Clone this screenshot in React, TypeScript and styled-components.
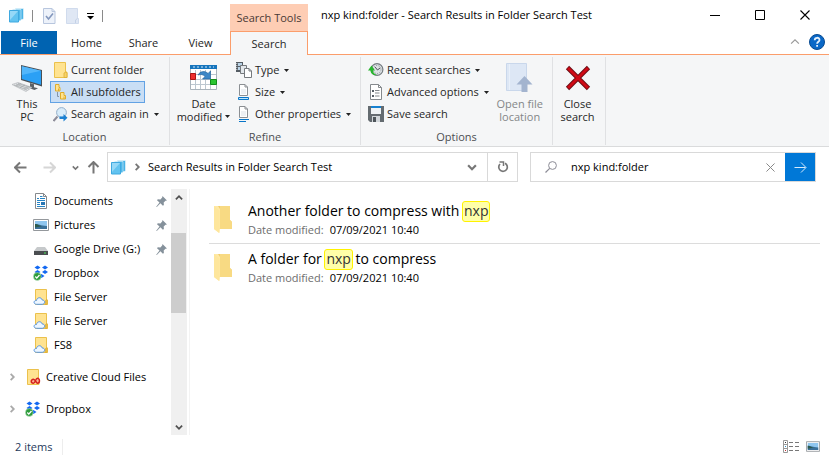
import React from "react";
import styled, { createGlobalStyle, css } from "styled-components";

const GlobalStyle = createGlobalStyle`
  * { box-sizing: border-box; }
  body {
    margin: 0;
    background: #fff;
    color: #000;
    font-family: "Open Sans", "Noto Sans", sans-serif;
    font-size: 11px;
    line-height: 16px;
  }
  button, input { font: inherit; color: inherit; }
  button { border: 0; padding: 0; background: transparent; white-space: nowrap; }
  svg { display: block; flex: none; }
  ul { list-style: none; margin: 0; padding: 0; }
`;

const Window = styled.div`
  display: flex;
  flex-direction: column;
  min-height: 100vh;
`;

/* ---------- title bar and tabs ---------- */

const Header = styled.header`
  display: grid;
  grid-template-columns: 230px 78px 1fr;
  grid-template-rows: 31px 24px;
`;

const QuickAccess = styled.div`
  display: flex;
  align-items: center;
  gap: 8px;
  padding-left: 9px;
`;

const QuickDivider = styled.span`
  width: 1px;
  height: 12px;
  background: #8a8a8a;
`;

const QuickButton = styled.button<{ $page?: boolean }>`
  display: flex;
  margin-left: ${(p) => (p.$page ? 2 : 0)}px;
`;

const ContextLabel = styled.div`
  margin-top: 4px;
  padding-top: 6px;
  background: #fecdb4;
  color: #4a3a34;
  text-align: center;
  white-space: nowrap;
`;

const TitleBar = styled.div`
  display: flex;
  align-items: center;
  justify-content: space-between;
  padding: 0 2px 1px 13px;
`;

const Title = styled.h1`
  margin: 0;
  font-size: 11px;
  font-weight: 400;
  white-space: nowrap;
`;

const WindowButtons = styled.div`
  display: flex;
`;

const WindowButton = styled.button`
  display: flex;
  align-items: center;
  justify-content: center;
  width: 45px;
  height: 30px;
`;

const Tabs = styled.nav`
  display: flex;
  border-bottom: 1px solid #fb9d6b;
`;

const Tab = styled.button<{ $file?: boolean; $active?: boolean }>`
  width: 57px;
  color: #262626;
  ${(p) =>
    p.$file &&
    css`
      margin: 0 1px;
      width: 56px;
      background: #0063b1;
      color: #fff;
    `}
  ${(p) =>
    p.$active &&
    css`
      width: 100%;
      border: 1px solid #fb9d6b;
      border-bottom: 0;
      background: #f5f6f7;
    `}
`;

const TabTools = styled.div`
  display: flex;
  align-items: center;
  justify-content: flex-end;
  gap: 9px;
  padding: 0 4px 1px 0;
  border-bottom: 1px solid #fb9d6b;
`;

const IconButton = styled.button`
  display: flex;
  align-items: center;
  justify-content: center;
`;

/* ---------- ribbon ---------- */

const Ribbon = styled.section`
  display: grid;
  grid-template-columns: 170px 191px 192px 53px;
  padding: 2px 0 1px;
  background: #f5f6f7;
  border-bottom: 1px solid #dadbdc;
`;

const Group = styled.div`
  display: flex;
  flex-direction: column;
  border-right: 1px solid #e0e1e3;
`;

const GroupBody = styled.div`
  display: flex;
  flex: 1;
  padding: 2px 0 0 4px;
`;

const GroupLabel = styled.div`
  height: 20px;
  padding-top: 4px;
  line-height: 16px;
  text-align: center;
  color: #4c4f52;
`;

const BigButton = styled.button<{ $width: number; $muted?: boolean }>`
  display: flex;
  flex-direction: column;
  align-items: center;
  width: ${(p) => p.$width}px;
  padding-top: 2px;
  line-height: 13px;
  color: ${(p) => (p.$muted ? "#848688" : "#262626")};
`;

const BigIcon = styled.span`
  display: flex;
  align-items: center;
  justify-content: center;
  height: 34px;
  margin-bottom: 2px;
`;

const CaptionLine = styled.span`
  display: flex;
  align-items: center;
  gap: 3px;
`;

const Stack = styled.div`
  display: flex;
  flex-direction: column;
  align-items: flex-start;
`;

const SmallButton = styled.button<{ $selected?: boolean }>`
  display: flex;
  align-items: center;
  gap: 3px;
  height: 22px;
  padding: 0 3px 0 2px;
  border: 1px solid ${(p) => (p.$selected ? "#62a2e4" : "transparent")};
  background: ${(p) => (p.$selected ? "#c9def5" : "transparent")};
  color: #262626;
`;

const CaretGap = styled.span`
  padding-left: 2px;
`;

/* ---------- address row ---------- */

const AddressRow = styled.div`
  display: grid;
  grid-template-columns: 107px minmax(0, 411fr) minmax(0, 298fr);
  align-items: center;
  padding: 5px 13px 7px 0;
`;

const Arrows = styled.div`
  display: flex;
  align-items: center;
  padding-left: 14px;
`;

const ArrowButton = styled(IconButton)<{ $width: number }>`
  width: ${(p) => p.$width}px;
  height: 24px;
`;

const AddressBox = styled.div`
  display: flex;
  height: 30px;
  border: 1px solid #d9d9d9;
`;

const Crumbs = styled.div`
  display: flex;
  flex: 1;
  align-items: center;
  gap: 7px;
  padding-left: 3px;
`;

const BoxButton = styled(IconButton)<{ $divided?: boolean }>`
  width: 30px;
  border-left: ${(p) => (p.$divided ? "1px solid #d9d9d9" : "0")};
`;

const SearchForm = styled.form`
  display: flex;
  align-items: stretch;
  height: 30px;
  margin-left: 12px;
  padding-left: 14px;
  border: 1px solid #d9d9d9;
`;

const SearchLabel = styled.label`
  display: flex;
  flex: 1;
  align-items: center;
  gap: 14px;
  min-width: 0;
`;

const SearchInput = styled.input`
  flex: 1;
  min-width: 0;
  padding: 0;
  border: 0;
  outline: 0;
  background: transparent;
`;

const GoButton = styled(IconButton)`
  width: 30px;
  background: #0078d7;
`;

/* ---------- body ---------- */

const Body = styled.div`
  display: flex;
  flex: 1;
`;

const NavPane = styled.nav`
  width: 171px;
`;

const NavItem = styled.li<{ $root?: boolean }>`
  display: flex;
  align-items: center;
  height: 24px;
  margin-top: ${(p) => (p.$root ? 8 : 0)}px;
  padding-left: ${(p) => (p.$root ? 8 : 33)}px;
  padding-right: 4px;
`;

const Expander = styled(IconButton)`
  width: 8px;
  margin-right: 9px;
`;

const NavLink = styled.a`
  display: flex;
  flex: 1;
  align-items: center;
  gap: 5px;
  color: inherit;
  text-decoration: none;
  white-space: nowrap;
`;

const ScrollBar = styled.div`
  display: flex;
  flex-direction: column;
  width: 16px;
  background: #f0f0f0;
`;

const ScrollButton = styled(IconButton)`
  height: 17px;
`;

const ScrollGap = styled.span<{ $share: number }>`
  flex: ${(p) => p.$share} 1 0;
`;

const ScrollThumb = styled.span`
  flex: 79 1 0;
  margin-right: 1px;
  background: #cdcdcd;
`;

const Results = styled.main`
  flex: 1;
  margin-left: 2px;
  padding: 7px 9px 0 19px;
  border-left: 1px solid #f3f3f3;
`;

const Result = styled.li`
  display: flex;
  align-items: center;
  gap: 12px;
  height: 48px;
  padding: 0 0 2px 3px;
  &:not(:last-child) { border-bottom: 1px solid #dcdcdc; }
`;

const ResultTitle = styled.a`
  display: block;
  color: #000;
  font-size: 14px;
  line-height: 22px;
  text-decoration: none;
  white-space: nowrap;
`;

const Mark = styled.mark`
  display: inline-block;
  height: 21px;
  margin: 0 -1px;
  padding: 0 1px;
  border: 1px solid #fff200;
  border-radius: 3px;
  background: #ffffa8;
  color: #333;
  line-height: 18px;
`;

const ResultMeta = styled.div`
  display: flex;
  gap: 6px;
  color: #6d6d6d;
`;

const MetaValue = styled.span`
  color: #000;
`;

const StatusBar = styled.footer`
  display: flex;
  align-items: center;
  justify-content: space-between;
  height: 24px;
  padding: 0 9px 0 15px;
  color: #1e395b;
`;

const Count = styled.span`
  padding-right: 10px;
  border-right: 1px solid #ededed;
`;

const ViewButtons = styled.div`
  display: flex;
  align-items: center;
  gap: 7px;
  padding-bottom: 2px;
`;

/* ---------- icons ---------- */

const Caret = () => (
  <svg width="5" height="3" viewBox="0 0 5 3"><path d="M0 0h5L2.5 3z" fill="#222" /></svg>
);

const StackIcon = () => (
  <svg width="15" height="15" viewBox="0 0 15 15">
    <path d="M6 .5h8.500v10.500l-3 1z" fill="#49b3e6" stroke="#fff" strokeWidth=".5" />
    <path d="M3.500 1.500h8.500v11l-5 1z" fill="#4fb9ea" stroke="#fff" strokeWidth=".5" />
    <path d="M.5 2.500h9v11.500h-9z" fill="#62c3f0" stroke="#3fa9e0" />
    <path d="M1 3h8L1 12z" fill="#96d8f7" />
  </svg>
);

const CheckPage = () => (
  <svg width="13" height="16" viewBox="0 0 13 16">
    <path d="M.5.5h8.500l3 3v12H.5z" fill="#edf2fa" stroke="#b8c6de" />
    <path d="M9 .5v3h3" fill="none" stroke="#b8c6de" />
    <path d="m3 8 2.500 3L10 5.500" fill="none" stroke="#8397bd" strokeWidth="1.600" />
  </svg>
);

const PalePage = () => (
  <svg width="13" height="16" viewBox="0 0 13 16">
    <path d="M.5.5h11v10h1v5H.5z" fill="#dfe7f4" stroke="#d0dbed" />
    <path d="M9.500 15v-3l2-1.500" fill="none" stroke="#c4d1e6" />
  </svg>
);

const QuickMenu = () => (
  <svg width="7" height="8" viewBox="0 0 7 8"><path d="M0 1h7v1H0zM0 4h7L3.500 7.500z" fill="#000" /></svg>
);

const ThisPc = () => (
  <svg width="32" height="30" viewBox="0 0 32 30">
    <path d="M10 2 31 7v16.500L10 17z" fill="#4a4f54" />
    <path d="M10.800 3.200 30 7.800v14L10.800 16z" fill="#2ba0f5" />
    <path d="M10.800 3.200 30 7.800 10.800 12z" fill="#53b6fa" />
    <path d="m19 20 4 1.200v3l4 1-3.500 1.800-7-2.500 2.500-1z" fill="#5c6166" />
    <path d="m1 21.500 6-2 14 5-6 4z" fill="#dfe2e4" stroke="#b4b8bb" strokeWidth=".7" />
    <path d="M3 22l13 5M5 21l13 5M7 20.300l12.500 4.400M5 23l5-2.500M9 24.500l5-2.500M13 26l5-2.500" stroke="#a4a8ab" strokeWidth=".7" />
  </svg>
);

const FolderSmall = () => (
  <svg width="15" height="16" viewBox="0 0 15 16">
    <path d="M1.500.5h11V10h1.500v5.500H1.500z" fill="#ffe391" stroke="#ebc14c" />
    <path d="M11 15.500V11l2-1 1 1v4.500z" fill="#f8d269" stroke="#dcae34" strokeWidth=".8" />
  </svg>
);

const SubfoldersIcon = () => (
  <svg width="15" height="16" viewBox="0 0 15 16">
    <path d="M4.500 8v4.500H6" fill="none" stroke="#8395a8" />
    <path d="M2.500.5h3.500v3h1v3.500H2.500zM7.500 8.500h3.500v3h1.500v3.500h-5z" fill="#ffe391" stroke="#e0ac2a" />
    <path d="M5.500 7V4.500M11 15v-2.500" stroke="#e0ac2a" />
  </svg>
);

const SearchAgainIcon = () => (
  <svg width="15" height="15" viewBox="0 0 15 15">
    <path d="m.5 14 4-4.500" stroke="#8d8c99" strokeWidth="2" />
    <circle cx="8.500" cy="5.500" r="4.900" fill="#d8ecfa" stroke="#92aec9" />
    <path d="M6.500 9.500h4V7l4 3.750-4 3.750V12h-4z" fill="#1a80d2" />
  </svg>
);

const CalendarIcon = () => (
  <svg width="27" height="26" viewBox="0 0 27 26">
    <path d="M.5.5h26v24H.5z" fill="#fff" stroke="#a9b3bb" />
    <path d="M0 0h27v4H0z" fill="#1675bd" />
    <path d="M3 2h21" stroke="#d3eafa" strokeDasharray="2 2" />
    <path d="M1 9.500h25M1 14.500h25M1 19.500h25M5.500 5v19M10.500 5v19M15.500 5v19M20.500 5v19" stroke="#bcc7d0" />
    <path d="M.5 8.500h5v6h-5z" fill="#ee2f2f" stroke="#aa1515" />
    <path d="M20.500 14.500h6v5h-6z" fill="#2bc531" stroke="#138c1b" />
    <path d="M8 10c2-4 7-4.500 10-1.500L20.500 6v8h-8l2.500-2.500c-2-2-4-2.500-7-1.500z" fill="#3e87c6" stroke="#205f99" strokeWidth=".6" />
  </svg>
);

const TypeIcon = () => (
  <svg width="16" height="16" viewBox="0 0 16 16">
    <path d="M0 0h7v10H0z" fill="#555d64" />
    <path d="M2 1h4v3H2zM2 5h4v3H2z" fill="#b9d3e7" />
    <path d="M.8 1v8" stroke="#fff" strokeWidth=".8" strokeDasharray="1 1" />
    <path d="M4.500 3.500h6v8h-6z" fill="#e2e7eb" stroke="#75797d" />
    <path d="M8.500 6.500h4.500l2.500 2.500v6.500h-7z" fill="#fff" stroke="#75797d" />
    <path d="M13 6.500V9h2.500" fill="none" stroke="#75797d" />
  </svg>
);

const PageLines = ({ bar }: { bar?: boolean }) => (
  <svg width="16" height="16" viewBox="0 0 16 16">
    <path d="M3.500.5H9L11.500 3v8.500h-8z" fill="#fff" stroke="#8b8f93" />
    <path d="M5 5h5v5H5z" fill="#edf0f3" />
    <path d="M9 .5V3h2.500" fill="none" stroke="#8b8f93" />
    {bar ? (
      <path d="M2.500 13.500h10v2h-10z" fill="#bfe4fb" stroke="#0876c9" />
    ) : (
      <path d="M3 13.500h10M3 15.500h7" stroke="#0876c9" />
    )}
  </svg>
);

const RecentIcon = () => (
  <svg width="16" height="16" viewBox="0 0 16 16">
    <circle cx="9" cy="7.500" r="5.900" fill="#dce1e4" stroke="#747b80" strokeWidth="1.200" />
    <circle cx="9" cy="7.500" r="4" fill="none" stroke="#84898d" strokeDasharray="1 1.500" />
    <path d="m7 5 2.500 3L12 6" fill="none" stroke="#4c5459" />
    <path d="M9 13c-4 .8-6.500-1.500-6.500-4.500H0l3.500-5 3.500 5H5c0 2 1.500 3.500 4 4.500z" fill="#29b52f" />
  </svg>
);

const AdvancedIcon = () => (
  <svg width="16" height="16" viewBox="0 0 16 16">
    <path d="M2.500.5h8l3 3v12h-11z" fill="#fff" stroke="#85898d" />
    <path d="M10.500.5v3h3M7 6.500h4.500M7 9h4.500M7 12h4.500" fill="none" stroke="#85898d" />
    <path d="M4 6h2v2H4zM4 11h2v2H4z" fill="#555d64" />
  </svg>
);

const SaveIcon = () => (
  <svg width="16" height="16" viewBox="0 0 16 16">
    <path d="M0 0h16v16H2l-2-2z" fill="#646b70" />
    <path d="M3 0h10v8H3z" fill="#eef2f4" />
    <path d="M3 0h10v2H3z" fill="#1681d0" />
    <path d="M4 10h8v6H4z" fill="#d1d6da" />
    <path d="M5 11h3v5H5z" fill="#4d5459" />
  </svg>
);

const OpenLocation = () => (
  <svg width="27" height="30" viewBox="0 0 27 30">
    <path d="M.5.5h20v27H.5z" fill="#dde7f5" stroke="#c9d7eb" />
    <path d="M3.500 1v26" stroke="#e9f0fa" />
    <path d="m18.500 13 8 8.500h-5V29h-6v-7.500h-5z" fill="#a3b4cf" />
  </svg>
);

const CloseSearch = () => (
  <svg width="26" height="26" viewBox="0 0 26 26">
    <path d="m2.500 2.500 21 21m0-21-21 21" stroke="#650b12" strokeWidth="4.600" />
    <path d="m3 3 20 20m0-20L3 23" stroke="#cf0a15" strokeWidth="3" />
  </svg>
);

const Chevron = ({ dir, color = "#666", size = 8, weight = 2 }: { dir: "up" | "down" | "right"; color?: string; size?: number; weight?: number }) => {
  const d = { up: "m1 6 3.500-3.500L8 6", down: "m1 3 3.500 3.500L8 3", right: "m3 1 3.500 3.500L3 8" }[dir];
  return (
    <svg width={size} height={size} viewBox="0 0 9 9"><path d={d} fill="none" stroke={color} strokeWidth={weight} /></svg>
  );
};

const Arrow = ({ color, turn = 0, weight = 2 }: { color: string; turn?: number; weight?: number }) => (
  <svg width="13" height="13" viewBox="0 0 13 13">
    <path d="M12.500 6.500H1.500M6 1.500l-5 5 5 5" fill="none" stroke={color} strokeWidth={weight} transform={`rotate(${turn} 6.500 6.500)`} />
  </svg>
);

const RefreshIcon = () => (
  <svg width="12" height="12" viewBox="0 0 12 12">
    <path d="M8 2.200A4.300 4.300 0 1 1 3 3" fill="none" stroke="#777" strokeWidth="1.700" />
    <path d="M2.500 1h4v4" fill="none" stroke="#777" strokeWidth="1.500" />
  </svg>
);

const GlassIcon = () => (
  <svg width="12" height="12" viewBox="0 0 12 12">
    <circle cx="7.500" cy="4.500" r="3.900" fill="none" stroke="#8c8c96" />
    <path d="m4.700 7.300-4.200 4.200" stroke="#8c8c96" strokeWidth="1.200" />
  </svg>
);

const Cross = ({ size, color }: { size: number; color: string }) => (
  <svg width={size} height={size} viewBox="0 0 10 10"><path d="m.5.5 9 9m0-9-9 9" stroke={color} strokeWidth="1.100" /></svg>
);

const HelpIcon = () => (
  <svg width="16" height="16" viewBox="0 0 16 16">
    <circle cx="8" cy="8" r="7.500" fill="#0a68c7" stroke="#084b91" />
    <path d="M5.700 6.200C5.700 3 10.500 3 10.500 6c0 1.700-2.400 1.900-2.400 3.800" fill="none" stroke="#e4f1fd" strokeWidth="1.800" />
    <path d="M7.200 10.900H9v1.800H7.200z" fill="#e4f1fd" />
  </svg>
);

const DocumentIcon = () => (
  <svg width="16" height="16" viewBox="0 0 16 16">
    <path d="M2.500.5h8l3 3v12h-11z" fill="#fff" stroke="#85898d" />
    <path d="M10.500.5v3h3" fill="none" stroke="#85898d" />
    <path d="M7 3.500h2.500M4 5.500h2M7 5.500h5M4 7.500h8M4 9.500h3M4 11.500h3M4 13.500h8" stroke="#2584c6" />
    <path d="M8 9h4v3H8z" fill="#2a77b4" />
  </svg>
);

const PictureIcon = ({ width = 16, height = 12 }: { width?: number; height?: number }) => (
  <svg width={width} height={height} viewBox="0 0 16 12">
    <path d="M.5.5h15v11H.5z" fill="#fff" stroke="#94989c" />
    <path d="M2 2h12v8H2z" fill="#8fc6ef" />
    <path d="M2 5c4 0 5 1.500 12 2v3H2z" fill="#3a7099" />
    <path d="M2 5c3 0 4 2 7 2.200L2 8.500z" fill="#2c5a4b" />
  </svg>
);

const DriveIcon = () => (
  <svg width="16" height="16" viewBox="0 0 16 16">
    <path d="M4 6h8l3 4H1z" fill="#c6c9cb" />
    <path d="M1 10h14v4H1z" fill="#4a4d50" />
    <path d="M11 11.500h2v1h-2z" fill="#4be35b" />
  </svg>
);

const DropboxIcon = () => (
  <svg width="16" height="16" viewBox="0 0 16 16">
    <path d="m4.500.5 3 2-3 2-3-2zM12 .5l3 2-3 2-3-2zM4.500 5l3 2-3 2-3-2zM12 5l3 2-3 2-3-2zM8.500 9l3 2-3 2-3-2z" fill="#1268f2" />
    <circle cx="4.300" cy="11.500" r="3.900" fill="#2c9b3b" stroke="#d7efd9" strokeWidth=".5" />
    <path d="m2.300 11.500 1.500 1.600L6.500 10" fill="none" stroke="#fff" strokeWidth="1.300" />
  </svg>
);

const CloudFolder = () => (
  <svg width="16" height="16" viewBox="0 0 16 16">
    <path d="M2.500.5h11V11h1v4.500h-12z" fill="#ffe391" stroke="#ebc14c" />
    <path d="M12 15.500V12l2-1.500v5z" fill="#efc24d" stroke="#dcae34" strokeWidth=".7" />
    <path d="M3.500 15.300c-3.500-.3-3-4 0-3.800.5-3.600 5-3.600 5.700-.5 3.300 0 3.300 4.200 0 4.300z" fill="#edf6ff" stroke="#5896df" />
  </svg>
);

const CreativeFolder = () => (
  <svg width="16" height="16" viewBox="0 0 16 16">
    <path d="M2.500.5h11V10h.5v5.500H2.500z" fill="#ffe391" stroke="#ebc14c" />
    <path d="M8.500 14.300c-3 0-3-4 0-4 1.800 0 2.600 4 4 4 2.600 0 2.600-5 0-5-2 0-2.300 5-4 5z" fill="#f9b394" stroke="#d5201e" strokeWidth="1.500" />
  </svg>
);

const PinIcon = () => (
  <svg width="11" height="11" viewBox="0 0 11 11">
    <path d="m6.500 0 4.500 4.500-1.500.3-1.800 1.800.2 2.400-1 .8-2.500-2.500L.8 11l-.6-.3L3.500 6.500 1 4.200l.8-1 2.600.2L6.200 1.600z" fill="#85919b" />
  </svg>
);

const LargeFolder = () => (
  <svg width="24" height="32" viewBox="0 0 24 32">
    <path d="M5 3h13v14l2 2v7H5z" fill="#f3cf6e" />
    <path d="M8 3h10v14l2 2v7H8z" fill="#f8da83" />
    <path d="M2 3h4l2 3v18.500L7 30l-5-4z" fill="#ffe9a5" />
    <path d="M2 3l5.500 4.500V30L2 26z" fill="#fee69c" />
  </svg>
);

const DetailsIcon = () => (
  <svg width="16" height="13" viewBox="0 0 16 13">
    <path d="M.5.5h4v12h-4zM.5 4.500h4M.5 8.500h4" fill="#fff" stroke="#999" />
    <path d="M6 2.500h4M12 2.500h4M6 6.500h4M12 6.500h4M6 10.500h4M12 10.500h4" stroke="#777" />
    <path d="M2 2h1v1H2z" fill="#333" /><path d="M2 6h1v1H2z" fill="#2a92c8" /><path d="M2 10h1v1H2z" fill="#c43232" />
  </svg>
);

/* ---------- data ---------- */

const quickLinks = [
  { name: "Documents", icon: <DocumentIcon />, pinned: true },
  { name: "Pictures", icon: <PictureIcon />, pinned: true },
  { name: "Google Drive (G:)", icon: <DriveIcon />, pinned: true },
  { name: "Dropbox", icon: <DropboxIcon /> },
  { name: "File Server", icon: <CloudFolder /> },
  { name: "File Server", icon: <CloudFolder /> },
  { name: "FS8", icon: <CloudFolder /> },
];

const rootLinks = [
  { name: "Creative Cloud Files", icon: <CreativeFolder /> },
  { name: "Dropbox", icon: <DropboxIcon /> },
];

const results = [
  { before: "Another folder to compress with ", match: "nxp", after: "", date: "07/09/2021 10:40" },
  { before: "A folder for ", match: "nxp", after: " to compress", date: "07/09/2021 10:40" },
];

function Small({ icon, label, menu, selected }: { icon: React.ReactNode; label: string; menu?: boolean; selected?: boolean }) {
  return (
    <SmallButton type="button" $selected={selected}>
      {icon}
      <span>{label}</span>
      {menu && <CaretGap><Caret /></CaretGap>}
    </SmallButton>
  );
}

function Big({ icon, lines, width, menu, muted }: { icon: React.ReactNode; lines: [string, string]; width: number; menu?: boolean; muted?: boolean }) {
  return (
    <BigButton type="button" $width={width} $muted={muted} disabled={muted}>
      <BigIcon>{icon}</BigIcon>
      <CaptionLine>{lines[0]}</CaptionLine>
      <CaptionLine>{lines[1]}{menu && <Caret />}</CaptionLine>
    </BigButton>
  );
}

export default function App() {
  return (
    <>
      <GlobalStyle />
      <Window>
        <Header>
          <QuickAccess>
            <StackIcon />
            <QuickDivider />
            <QuickButton type="button" aria-label="Properties" $page><CheckPage /></QuickButton>
            <QuickButton type="button" aria-label="New folder" $page><PalePage /></QuickButton>
            <QuickButton type="button" aria-label="Customize toolbar"><QuickMenu /></QuickButton>
            <QuickDivider />
          </QuickAccess>
          <ContextLabel>Search Tools</ContextLabel>
          <TitleBar>
            <Title>nxp kind:folder - Search Results in Folder Search Test</Title>
            <WindowButtons>
              <WindowButton type="button" aria-label="Minimize">
                <svg width="10" height="10" viewBox="0 0 10 10"><path d="M0 5.500h10" stroke="#000" /></svg>
              </WindowButton>
              <WindowButton type="button" aria-label="Maximize">
                <svg width="10" height="10" viewBox="0 0 10 10"><path d="M.5.5h9v9h-9z" fill="none" stroke="#000" /></svg>
              </WindowButton>
              <WindowButton type="button" aria-label="Close"><Cross size={10} color="#000" /></WindowButton>
            </WindowButtons>
          </TitleBar>
          <Tabs>
            <Tab type="button" $file>File</Tab>
            <Tab type="button">Home</Tab>
            <Tab type="button">Share</Tab>
            <Tab type="button">View</Tab>
          </Tabs>
          <Tab type="button" $active>Search</Tab>
          <TabTools>
            <IconButton type="button" aria-label="Collapse ribbon"><Chevron dir="up" color="#999" size={10} weight={1} /></IconButton>
            <IconButton type="button" aria-label="Help"><HelpIcon /></IconButton>
          </TabTools>
        </Header>

        <Ribbon>
          <Group>
            <GroupBody>
              <Big icon={<ThisPc />} lines={["This", "PC"]} width={46} />
              <Stack>
                <Small icon={<FolderSmall />} label="Current folder" />
                <Small icon={<SubfoldersIcon />} label="All subfolders" selected />
                <Small icon={<SearchAgainIcon />} label="Search again in" menu />
              </Stack>
            </GroupBody>
            <GroupLabel>Location</GroupLabel>
          </Group>
          <Group>
            <GroupBody>
              <Big icon={<CalendarIcon />} lines={["Date", "modified"]} width={59} menu />
              <Stack>
                <Small icon={<TypeIcon />} label="Type" menu />
                <Small icon={<PageLines bar />} label="Size" menu />
                <Small icon={<PageLines />} label="Other properties" menu />
              </Stack>
            </GroupBody>
            <GroupLabel>Refine</GroupLabel>
          </Group>
          <Group>
            <GroupBody>
              <Stack>
                <Small icon={<RecentIcon />} label="Recent searches" menu />
                <Small icon={<AdvancedIcon />} label="Advanced options" menu />
                <Small icon={<SaveIcon />} label="Save search" />
              </Stack>
              <Big icon={<OpenLocation />} lines={["Open file", "location"]} width={54} muted />
            </GroupBody>
            <GroupLabel>Options</GroupLabel>
          </Group>
          <Group>
            <GroupBody>
              <Big icon={<CloseSearch />} lines={["Close", "search"]} width={41} />
            </GroupBody>
          </Group>
        </Ribbon>

        <AddressRow>
          <Arrows>
            <ArrowButton type="button" aria-label="Back" $width={13}><Arrow color="#777" /></ArrowButton>
            <ArrowButton type="button" aria-label="Forward" $width={44}><Arrow color="#d6d6d6" turn={180} /></ArrowButton>
            <ArrowButton type="button" aria-label="Recent locations" $width={8}><Chevron dir="down" color="#777" size={7} /></ArrowButton>
            <ArrowButton type="button" aria-label="Up" $width={28}><Arrow color="#777" turn={90} /></ArrowButton>
          </Arrows>
          <AddressBox>
            <Crumbs>
              <StackIcon />
              <Chevron dir="right" color="#777" />
              <button type="button">Search Results in Folder Search Test</button>
            </Crumbs>
            <BoxButton type="button" aria-label="Previous locations"><Chevron dir="down" color="#777" size={10} /></BoxButton>
            <BoxButton type="button" aria-label="Refresh" $divided><RefreshIcon /></BoxButton>
          </AddressBox>
          <SearchForm onSubmit={(e) => e.preventDefault()}>
            <SearchLabel>
              <GlassIcon />
              <SearchInput type="text" aria-label="Search" defaultValue="nxp kind:folder" />
            </SearchLabel>
            <BoxButton type="button" aria-label="Clear search"><Cross size={9} color="#888" /></BoxButton>
            <GoButton type="submit" aria-label="Go"><Arrow color="#d5eafc" turn={180} weight={1} /></GoButton>
          </SearchForm>
        </AddressRow>

        <Body>
          <NavPane>
            <ul>
              {quickLinks.map((item, i) => (
                <NavItem key={i}>
                  <NavLink href="#">{item.icon}{item.name}</NavLink>
                  {item.pinned && <PinIcon />}
                </NavItem>
              ))}
              {rootLinks.map((item) => (
                <NavItem key={item.name} $root>
                  <Expander type="button" aria-label={`Expand ${item.name}`}><Chevron dir="right" color="#aaa" /></Expander>
                  <NavLink href="#">{item.icon}{item.name}</NavLink>
                </NavItem>
              ))}
            </ul>
          </NavPane>
          <ScrollBar>
            <ScrollButton type="button" aria-label="Scroll up"><Chevron dir="up" color="#505050" /></ScrollButton>
            <ScrollGap $share={27} />
            <ScrollThumb />
            <ScrollGap $share={105} />
            <ScrollButton type="button" aria-label="Scroll down"><Chevron dir="down" color="#505050" /></ScrollButton>
          </ScrollBar>
          <Results>
            <ul>
              {results.map((item) => (
                <Result key={item.before}>
                  <LargeFolder />
                  <div>
                    <ResultTitle href="#">{item.before}<Mark>{item.match}</Mark>{item.after}</ResultTitle>
                    <ResultMeta>Date modified: <MetaValue>{item.date}</MetaValue></ResultMeta>
                  </div>
                </Result>
              ))}
            </ul>
          </Results>
        </Body>

        <StatusBar>
          <Count>2 items</Count>
          <ViewButtons>
            <IconButton type="button" aria-label="Details view"><DetailsIcon /></IconButton>
            <IconButton type="button" aria-label="Large icons view"><PictureIcon width={14} height={11} /></IconButton>
          </ViewButtons>
        </StatusBar>
      </Window>
    </>
  );
}
